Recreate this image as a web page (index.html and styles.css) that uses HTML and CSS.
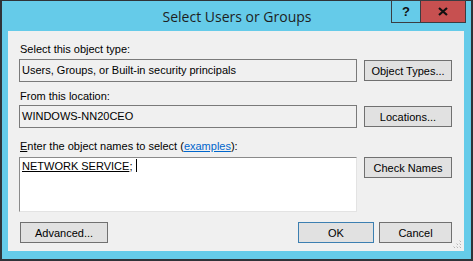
FILE: index.html
```html
<!DOCTYPE html>
<html lang="en">
<head>
    <meta charset="UTF-8">
    <title>Select Users or Groups</title>
    <link rel="stylesheet" href="styles.css">
</head>
<body>

<div class="window">
    <div class="titlebar">
        <span class="title">Select Users or Groups</span>
        <div class="caption-buttons">
            <div class="cap help">?</div>
            <div class="cap close">
                <svg width="10" height="9" viewBox="0 0 10 9">
                    <path d="M1 1 L9 8 M9 1 L1 8" stroke="#111" stroke-width="2.2" fill="none"/>
                </svg>
            </div>
        </div>
    </div>

    <div class="client">
        <p class="label">Select this object type:</p>
        <div class="row">
            <div class="field">Users, Groups, or Built-in security principals</div>
            <button class="btn">Object Types...</button>
        </div>

        <p class="label label-gap">From this location:</p>
        <div class="row row-tight">
            <div class="field">WINDOWS-NN20CEO</div>
            <button class="btn">Locations...</button>
        </div>

        <p class="label label-gap-lg"><u>E</u>nter the object names to select (<a class="link" href="#">examples</a>):</p>
        <div class="row row-top">
            <div class="names">
                <u>NETWORK SERVICE</u>; <span class="caret"></span>
            </div>
            <button class="btn">Check Names</button>
        </div>

        <div class="footer-row">
            <button class="btn btn-advanced">Advanced...</button>
            <button class="btn btn-ok">OK</button>
            <button class="btn btn-cancel">Cancel</button>
        </div>

        <svg class="grip" width="9" height="9" viewBox="0 0 9 9">
            <rect x="7" y="1" width="1" height="1" fill="#b4b4b4"/>
            <rect x="4" y="4" width="1" height="1" fill="#b4b4b4"/>
            <rect x="7" y="4" width="1" height="1" fill="#b4b4b4"/>
            <rect x="1" y="7" width="1" height="1" fill="#b4b4b4"/>
            <rect x="4" y="7" width="1" height="1" fill="#b4b4b4"/>
            <rect x="7" y="7" width="1" height="1" fill="#b4b4b4"/>
            <rect x="6" y="0" width="1" height="1" fill="#d6d6d6"/>
            <rect x="3" y="3" width="1" height="1" fill="#d6d6d6"/>
            <rect x="6" y="3" width="1" height="1" fill="#d6d6d6"/>
            <rect x="0" y="6" width="1" height="1" fill="#d6d6d6"/>
            <rect x="3" y="6" width="1" height="1" fill="#d6d6d6"/>
            <rect x="6" y="6" width="1" height="1" fill="#d6d6d6"/>
        </svg>
    </div>
</div>

</body>
</html>
```

FILE: styles.css
```css
* {
    box-sizing: border-box;
    margin: 0;
    padding: 0;
}

body {
    font-family: 'Liberation Sans', Arial, sans-serif;
    font-size: 11px;
    color: #000;
    width: 473px;
    height: 261px;
    overflow: hidden;
}

.window {
    position: relative;
    width: 473px;
    height: 261px;
    background: #65cbe9;
    border: 2px solid #2f3338;
    border-top-width: 1px;
    padding: 0 7px 8px 6px;
    display: flex;
    flex-direction: column;
}

.titlebar {
    height: 30px;
    display: flex;
    align-items: center;
    justify-content: center;
}

.title {
    font-family: 'Open Sans', sans-serif;
    font-size: 14px;
    color: #1e1e1e;
    margin-left: 2px;
}

.caption-buttons {
    position: absolute;
    top: -1px;
    right: 5px;
    display: flex;
}

.cap {
    height: 23px;
    border: 1px solid #3a3d42;
    display: flex;
    align-items: center;
    justify-content: center;
}

.help {
    width: 29px;
    border-right: none;
    font-weight: bold;
    font-size: 13px;
    color: #111;
}

.close {
    width: 46px;
    background: #c75050;
}

.client {
    position: relative;
    flex: 1;
    background: #f0f0f0;
    padding: 11px 12px 0 11px;
    display: flex;
    flex-direction: column;
}

.label {
    line-height: 15px;
    padding-left: 1px;
}

.label-gap {
    margin-top: 7px;
}

.label-gap-lg {
    margin-top: 11px;
}

.link {
    color: #0066cc;
}

.row {
    display: flex;
    align-items: center;
    gap: 7px;
    margin-top: 2px;
}

.row-tight {
    margin-top: 1px;
}

.row-top {
    align-items: flex-start;
    margin-top: 3px;
}

.field {
    width: 338px;
    height: 23px;
    border: 1px solid #7a7a7a;
    padding: 0 2px;
    line-height: 21px;
    white-space: nowrap;
}

.names {
    width: 338px;
    height: 55px;
    background: #fff;
    border: 1px solid;
    border-color: #8a8a8a #e3e3e3 #e3e3e3 #8a8a8a;
    padding: 1px 2px;
    line-height: 15px;
}

.caret {
    display: inline-block;
    width: 1px;
    height: 13px;
    background: #000;
    vertical-align: -2px;
}

.btn {
    width: 88px;
    height: 21px;
    background: #e1e1e1;
    border: 1px solid #707070;
    font-family: inherit;
    font-size: 11px;
    color: #000;
}

.footer-row {
    display: flex;
    margin-top: 10px;
}

.btn-advanced {
    margin-left: 1px;
}

.btn-ok {
    width: 76px;
    margin-left: auto;
    border-color: #3c7fb1;
}

.btn-cancel {
    width: 73px;
    margin-left: 5px;
}

.grip {
    position: absolute;
    right: 2px;
    bottom: 2px;
}
```
